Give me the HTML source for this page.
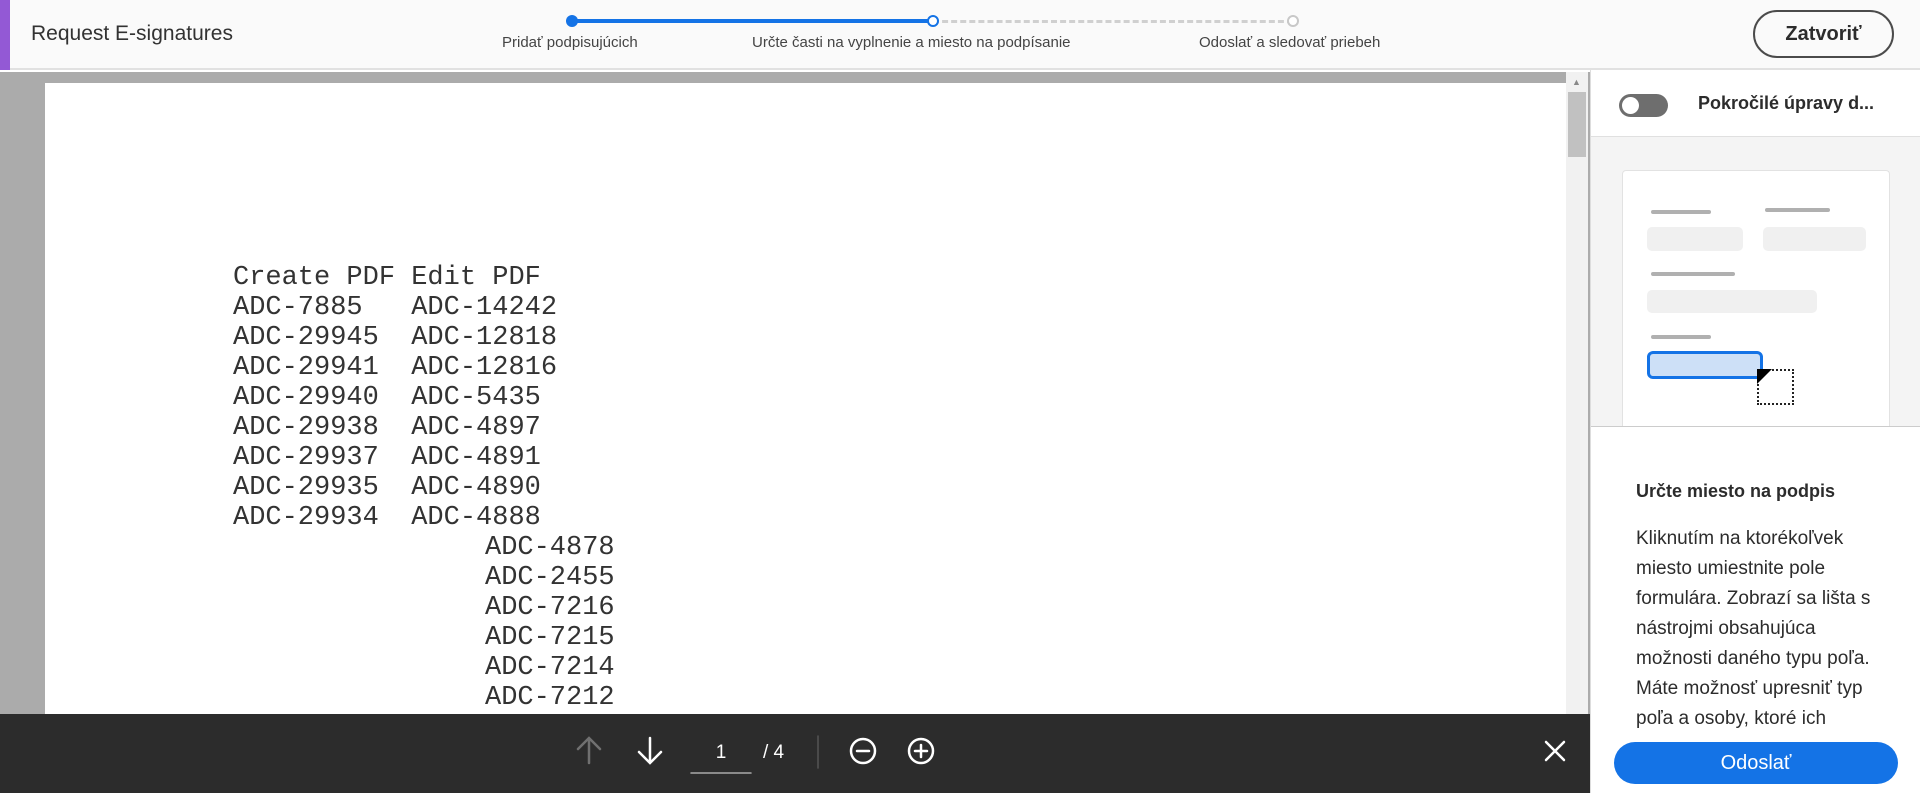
<!DOCTYPE html>
<html><head><meta charset="utf-8"><style>
*{margin:0;padding:0;box-sizing:border-box}
body{width:1920px;height:793px;overflow:hidden;font-family:"Liberation Sans",sans-serif;background:#fff;position:relative}
.a{position:absolute}
.hdr{left:0;top:0;width:1920px;height:70px;background:#fafafa;border-bottom:2px solid #e1e1e1}
.step{font-size:15px;color:#444;top:34px}
.mono{font-family:"Liberation Mono","Courier New",monospace;font-size:27px;color:#333;line-height:30px;white-space:pre}
.p{font-size:19px;color:#2c2c2c;line-height:30px}
</style></head><body>
<div class="a hdr"></div>
<div class="a" style="left:0;top:0;width:10px;height:70px;background:#9359d5"></div>
<div class="a" style="left:31px;top:22px;font-size:21px;color:#323232">Request E-signatures</div>
<div class="a" style="left:572px;top:19px;width:361px;height:4px;background:#1473e6"></div>
<div class="a" style="left:933px;top:20px;width:360px;border-top:3px dashed #d0d0d0"></div>
<div class="a" style="left:566px;top:15px;width:12px;height:12px;border-radius:50%;background:#1473e6"></div>
<div class="a" style="left:927px;top:15px;width:12px;height:12px;border-radius:50%;background:#fff;border:2px solid #1473e6"></div>
<div class="a" style="left:1287px;top:15px;width:12px;height:12px;border-radius:50%;background:#fff;border:2px solid #c8c8c8"></div>
<div class="a step" style="left:502px">Pridať podpisujúcich</div>
<div class="a step" style="left:752px">Určte časti na vyplnenie a miesto na podpísanie</div>
<div class="a step" style="left:1199px">Odoslať a sledovať priebeh</div>
<div class="a" style="left:1753px;top:10px;width:141px;height:48px;border:2px solid #4b4b4b;border-radius:24px;font-size:20px;font-weight:bold;color:#2c2c2c;text-align:center;line-height:44px">Zatvoriť</div>

<div class="a" style="left:0;top:72px;width:1590px;height:642px;background:#ababab"></div>
<div class="a" style="left:45px;top:83px;width:1521px;height:631px;background:#fff"></div>
<div class="a" style="left:1566px;top:72px;width:22px;height:642px;background:#f1f1f1"></div>
<div class="a" style="left:1568px;top:92px;width:18px;height:65px;background:#c1c1c1"></div>
<div class="a" style="left:1572px;top:77px;font-size:9px;color:#888">▲</div>
<div class="a mono" style="left:233px;top:263px">Create PDF Edit PDF
ADC-7885   ADC-14242
ADC-29945  ADC-12818
ADC-29941  ADC-12816
ADC-29940  ADC-5435
ADC-29938  ADC-4897
ADC-29937  ADC-4891
ADC-29935  ADC-4890
ADC-29934  ADC-4888</div>
<div class="a mono" style="left:485px;top:533px">ADC-4878
ADC-2455
ADC-7216
ADC-7215
ADC-7214
ADC-7212</div>

<div class="a" style="left:0;top:714px;width:1590px;height:79px;background:#2c2c2c"></div>
<svg class="a" style="left:0;top:714px" width="1590" height="79">
<g fill="none" stroke-width="2.5" stroke-linecap="round">
<path d="M589 49V24M578 35l11-11 11 11" stroke="#707070"/>
<path d="M650 24V49M639 38l11 11 11-11" stroke="#fff"/>
<path d="M691 59h60" stroke="#aaa" stroke-width="1.5"/>
<path d="M818 22v32" stroke="#555" stroke-width="1.5"/>
<circle cx="863" cy="37" r="12" stroke="#fff"/><path d="M857 37h12" stroke="#fff"/>
<circle cx="921" cy="37" r="12" stroke="#fff"/><path d="M915 37h12M921 31v12" stroke="#fff"/>
<path d="M1546 28l18 18M1564 28l-18 18" stroke="#fff"/>
</g>
<text x="721" y="44" fill="#fff" font-size="19" font-family="Liberation Sans" text-anchor="middle">1</text>
<text x="763" y="44" fill="#fff" font-size="19" font-family="Liberation Sans">/ 4</text>
</svg>

<div class="a" style="left:1590px;top:70px;width:330px;height:723px;background:#fff;border-left:1px solid #ddd"></div>
<div class="a" style="left:1619px;top:94px;width:49px;height:23px;border-radius:12px;background:#6e6e6e"></div>
<div class="a" style="left:1622px;top:97px;width:17px;height:17px;border-radius:50%;background:#fff"></div>
<div class="a" style="left:1698px;top:93px;font-size:18px;font-weight:bold;color:#2c2c2c">Pokročilé úpravy d...</div>
<div class="a" style="left:1591px;top:136px;width:329px;height:291px;background:#f4f4f4;border-top:1px solid #e0e0e0;border-bottom:1px solid #ccc"></div>
<div class="a" style="left:1622px;top:170px;width:268px;height:256px;background:#fff;border:1px solid #e2e2e2;border-bottom:none;border-radius:4px 4px 0 0"></div>
<div class="a" style="left:1651px;top:210px;width:60px;height:4px;border-radius:2px;background:#b0b0b0"></div>
<div class="a" style="left:1765px;top:208px;width:65px;height:4px;border-radius:2px;background:#b0b0b0"></div>
<div class="a" style="left:1647px;top:227px;width:96px;height:24px;border-radius:5px;background:#f0f0f0"></div>
<div class="a" style="left:1763px;top:227px;width:103px;height:24px;border-radius:5px;background:#f0f0f0"></div>
<div class="a" style="left:1651px;top:272px;width:84px;height:4px;border-radius:2px;background:#b0b0b0"></div>
<div class="a" style="left:1647px;top:290px;width:170px;height:23px;border-radius:5px;background:#f0f0f0"></div>
<div class="a" style="left:1651px;top:335px;width:60px;height:4px;border-radius:2px;background:#b0b0b0"></div>
<div class="a" style="left:1647px;top:351px;width:116px;height:28px;border-radius:6px;background:#cde0f7;border:3px solid #1473e6"></div>
<div class="a" style="left:1757px;top:369px;width:37px;height:36px;border:2px dotted #222;background:#fff"></div>
<svg class="a" style="left:1757px;top:369px" width="16" height="16"><path d="M0 0H15L0 15Z" fill="#000"/></svg>

<div class="a" style="left:1636px;top:481px;font-size:18px;font-weight:bold;color:#2c2c2c">Určte miesto na podpis</div>
<div class="a" style="left:1636px;top:524px;width:246px;height:208px;overflow:hidden"><div class="p">Kliknutím na ktorékoľvek miesto umiestnite pole formulára. Zobrazí sa lišta s nástrojmi obsahujúca možnosti daného typu poľa. Máte možnosť upresniť typ poľa a osoby, ktoré ich</div></div>
<div class="a" style="left:1614px;top:742px;width:284px;height:42px;border-radius:21px;background:#1473e6;color:#fff;font-size:20px;text-align:center;line-height:42px">Odoslať</div>
</body></html>
